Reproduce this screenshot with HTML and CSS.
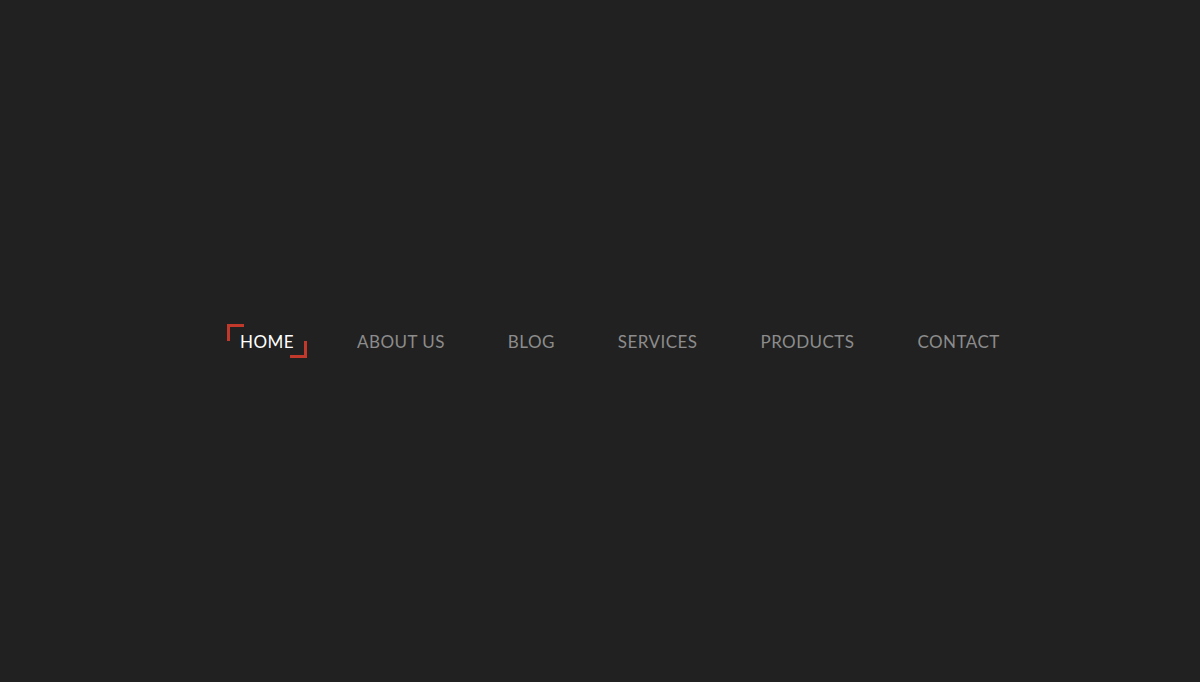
FILE: index.html
```html
<!DOCTYPE html>
<html lang="en">
<head>
<meta charset="utf-8">
<title>Menu</title>
<link rel="stylesheet" href="styles.css">
</head>
<body>
<nav class="menu">
  <a class="menu-item active" href="#">HOME</a>
  <a class="menu-item" href="#">ABOUT US</a>
  <a class="menu-item" href="#">BLOG</a>
  <a class="menu-item" href="#">SERVICES</a>
  <a class="menu-item" href="#">PRODUCTS</a>
  <a class="menu-item" href="#">CONTACT</a>
</nav>
</body>
</html>
```

FILE: styles.css
```css
html, body {
  margin: 0;
  padding: 0;
  background: #212121;
  height: 100%;
}
body {
  font-family: "Lato", "Open Sans", sans-serif;
  overflow: hidden;
}
.menu {
  display: flex;
  align-items: center;
  gap: 37px;
  padding-left: 227px;
  margin-top: 324px;
}
.menu-item {
  position: relative;
  display: block;
  height: 34px;
  line-height: 35px;
  padding: 0 13px;
  color: #8c8c8c;
  font-size: 17px;
  letter-spacing: 0.45px;
  text-decoration: none;
  white-space: nowrap;
}
.menu-item.active {
  color: #ffffff;
}
.menu-item.active::before,
.menu-item.active::after {
  content: "";
  position: absolute;
  width: 14px;
  height: 14px;
  border: 0 solid #c0392b;
}
.menu-item.active::before {
  top: 0;
  left: 0;
  border-top-width: 3px;
  border-left-width: 3px;
}
.menu-item.active::after {
  bottom: 0;
  right: 0;
  border-bottom-width: 3px;
  border-right-width: 3px;
}
```
